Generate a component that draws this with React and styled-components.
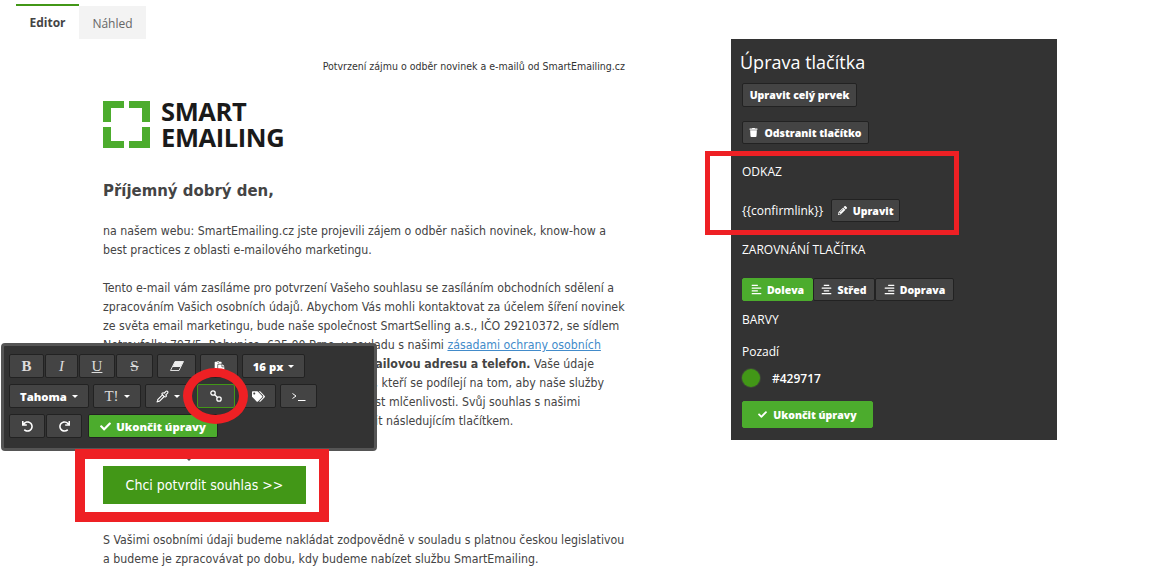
import React from 'react';
import styled, {createGlobalStyle} from 'styled-components';
import {
  FaAlignCenter,
  FaAlignLeft,
  FaAlignRight,
  FaCheck,
  FaPaste,
  FaPencilAlt,
  FaRedo,
  FaTags,
  FaTrash,
  FaUndo
} from 'react-icons/fa';
import {Pipette} from 'lucide-react';

const GlobalStyle = createGlobalStyle`
  html, body {
    margin: 0;
    padding: 0;
    background: #fff;
    overflow: hidden;
  }
`;

const Page = styled.div`
  position: relative;
  width: 1158px;
  height: 582px;
  overflow: hidden;
  font-family: 'Open Sans', sans-serif;
`;

const Tabs = styled.div`
  display: flex;
  align-items: flex-end;
  height: 39px;
  padding-left: 16px;
`;

const Tab = styled.div`
  display: flex;
  align-items: center;
  justify-content: center;
  box-sizing: border-box;
  width: ${props => props.width}px;
  height: ${props => (props.active ? 35 : 33)}px;
  font-size: 12px;
  font-weight: ${props => (props.active ? 700 : 400)};
  color: ${props => (props.active ? '#444' : '#666')};
  background: ${props => (props.active ? '#fff' : '#f3f3f3')};
  border-top: ${props => (props.active ? '2px solid #429717' : 'none')};
  padding-top: ${props => (props.active ? 0 : 2)}px;
  padding-bottom: ${props => (props.active ? 1 : 0)}px;
`;

const Columns = styled.div`
  display: flex;
  align-items: flex-start;
  padding-left: 103px;
`;

const Email = styled.div`
  width: 522px;
  flex-shrink: 0;
  font-family: 'DejaVu Sans Condensed', 'DejaVu Sans', sans-serif;
  font-stretch: condensed;
  font-size: 12.25px;
  line-height: 19px;
  color: #444;
  white-space: nowrap;
`;

const Preheader = styled.div`
  margin-top: 19px;
  height: 17px;
  line-height: 17px;
  text-align: right;
  font-size: 10.5px;
  color: #333;
`;

const Logo = styled.div`
  display: flex;
  align-items: center;
  margin-top: 26px;
  height: 47px;
  gap: 11px;
`;

const LogoText = styled.div`
  font-family: 'Open Sans', sans-serif;
  font-stretch: normal;
  font-weight: 700;
  font-size: 25.5px;
  line-height: 25.5px;
  letter-spacing: -0.4px;
  color: #1a1a1a;
`;

const Greeting = styled.h1`
  margin: 29px 0 0;
  font-size: 16.6px;
  line-height: 28px;
  font-weight: 700;
  color: #444;
`;

const Paragraph = styled.p`
  margin: ${props => props.top}px 0 0;
`;

const Link = styled.a`
  color: #428bca;
  text-decoration: underline;
`;

const CtaButton = styled.div`
  display: flex;
  align-items: center;
  justify-content: center;
  width: 203px;
  height: 38px;
  margin-top: 35px;
  background: #429717;
  color: #fff;
  font-size: 14px;
`;

const Panel = styled.aside`
  box-sizing: border-box;
  width: 326px;
  height: 401px;
  margin-left: 106px;
  padding: 10px 11px 0;
  background: #333;
  color: #fff;
  font-size: 12px;
  font-weight: 500;
  flex-shrink: 0;
`;

const PanelTitle = styled.h2`
  margin: 0 0 8px -2px;
  font-size: 18px;
  line-height: 26px;
  font-weight: 400;
`;

const Stack = styled.div`
  display: flex;
  flex-direction: column;
  align-items: flex-start;
  gap: 14px;
`;

const PanelButton = styled.button`
  display: inline-flex;
  align-items: center;
  justify-content: center;
  gap: ${props => (props.iconSize ? 5 : 6)}px;
  box-sizing: border-box;
  height: ${props => props.height || 24}px;
  width: ${props => props.width}px;
  padding: 0;
  border: 1px solid #222;
  border-radius: 2px;
  background: ${props => (props.primary ? '#4cac2d' : '#444')};
  border-color: ${props => (props.primary ? '#4cac2d' : '#222')};
  color: #fff;
  font-family: 'Open Sans', sans-serif;
  font-size: 10.5px;
  font-weight: 800;
  svg {
    font-size: ${props => props.iconSize || 9}px;
  }
`;

const SectionLabel = styled.div`
  height: 18px;
  line-height: 18px;
  margin-top: ${props => props.top}px;
  font-size: 12px;
`;

const LinkRow = styled.div`
  display: flex;
  align-items: center;
  gap: 8px;
  margin-top: 18px;
`;

const AlignGroup = styled.div`
  display: flex;
  margin-top: 19px;
`;

const ColorRow = styled.div`
  display: flex;
  align-items: center;
  gap: 12px;
  margin-top: 6px;
  height: 22px;
  font-weight: 600;
  font-size: 12px;
`;

const Swatch = styled.span`
  width: 18px;
  height: 18px;
  border-radius: 50%;
  background: #429717;
  box-shadow: 0 0 0 1px #3d4a36;
`;

const Finish = styled.div`
  margin-top: 12px;
`;

const Toolbar = styled.div`
  position: absolute;
  left: 1px;
  top: 343px;
  box-sizing: border-box;
  width: 376px;
  height: 108px;
  padding: 8px 5px;
  display: flex;
  flex-direction: column;
  gap: 6px;
  background: #333;
  border: 3px solid #555;
  border-radius: 4px;
  &::after {
    content: '';
    position: absolute;
    left: 178px;
    bottom: -7px;
    border: 6px solid transparent;
    border-bottom: 0;
    border-top-color: #555;
  }
`;

const ToolRow = styled.div`
  display: flex;
  height: 24px;
`;

const Tool = styled.button`
  display: flex;
  align-items: center;
  justify-content: center;
  gap: 5px;
  box-sizing: border-box;
  flex-shrink: 0;
  width: ${props => props.width}px;
  height: 24px;
  margin-left: ${props => props.gap || 0}px;
  padding: 0;
  background: ${props => (props.primary ? '#4cac2d' : '#444')};
  border: 1px solid ${props => (props.active ? '#429717' : '#222')};
  border-radius: 2px;
  color: ${props => (props.serif ? '#ddd' : '#fff')};
  font-family: ${props => (props.serif ? "'Liberation Serif', serif" : "'Open Sans', sans-serif")};
  font-size: ${props => (props.serif ? 15 : 11.3)}px;
  font-weight: ${props => (props.strong ? 700 : props.serif ? 400 : 800)};
  font-style: ${props => (props.italic ? 'italic' : 'normal')};
  text-decoration: ${props => props.deco || 'none'};
  svg {
    font-size: ${props => props.iconSize || 11}px;
  }
`;

const Caret = styled.span`
  width: 0;
  height: 0;
  border: 3px solid transparent;
  border-bottom: 0;
  border-top-color: #fff;
`;

const PointerTip = styled.div`
  position: absolute;
  left: 187px;
  top: 459px;
  width: 0;
  height: 0;
  border: 2px solid transparent;
  border-bottom: 0;
  border-top-color: #555;
`;

const Ring = styled.div`
  position: absolute;
  left: 183px;
  top: 368px;
  box-sizing: border-box;
  width: 65px;
  height: 56px;
  border: 9px solid #ee2024;
  border-radius: 50%;
`;

const Highlight = styled.div`
  position: absolute;
  left: ${props => props.x}px;
  top: ${props => props.y}px;
  box-sizing: border-box;
  width: ${props => props.w}px;
  height: ${props => props.h}px;
  border: ${props => props.thick}px solid #ee2024;
`;

const bracket = 'M0 0H21V7H8V21H0Z';

function LogoMark() {
  return (
    <svg width="47" height="47" viewBox="0 0 47 47">
      <g fill="#4cac2d">
        <path d={bracket} />
        <path d={bracket} transform="matrix(-1 0 0 1 47 0)" />
        <path d={bracket} transform="matrix(1 0 0 -1 0 47)" />
        <path d={bracket} transform="matrix(-1 0 0 -1 47 47)" />
      </g>
    </svg>
  );
}

function EraserIcon() {
  return (
    <svg width="14" height="10" viewBox="0 0 14 10">
      <path d="M5 .5H13.5L9 9.5H.5Z" fill="none" stroke="#ddd" />
      <path d="M5 .5H13.5L10.5 6H2.5Z" fill="#eee" />
    </svg>
  );
}

function ChainIcon() {
  return (
    <svg width="12" height="12" viewBox="0 0 12 12" fill="none" stroke="#fff" strokeWidth="1.3">
      <circle cx="3" cy="3" r="2.2" />
      <circle cx="9" cy="9" r="2.2" />
      <path d="M4.5 4.5L7.5 7.5" />
    </svg>
  );
}

function PromptIcon() {
  return (
    <svg width="14" height="9" viewBox="0 0 14 9" fill="none" stroke="#fff" strokeWidth="1">
      <path d="M0.5 1.5L4 4L0.5 6.5" />
      <path d="M6 8.5H13.5" />
    </svg>
  );
}

export default function App() {
  return (
    <Page>
      <GlobalStyle />
      <Tabs>
        <Tab active width={63}>Editor</Tab>
        <Tab width={67}>Náhled</Tab>
      </Tabs>
      <Columns>
        <Email>
          <Preheader>Potvrzení zájmu o odběr novinek a e-mailů od SmartEmailing.cz</Preheader>
          <Logo>
            <LogoMark />
            <LogoText>SMART<br />EMAILING</LogoText>
          </Logo>
          <Greeting>Příjemný dobrý den,</Greeting>
          <Paragraph top={17}>
            na našem webu: SmartEmailing.cz jste projevili zájem o odběr našich novinek, know-how a<br />
            best practices z oblasti e-mailového marketingu.
          </Paragraph>
          <Paragraph top={19}>
            Tento e-mail vám zasíláme pro potvrzení Vašeho souhlasu se zasíláním obchodních sdělení a<br />
            zpracováním Vašich osobních údajů. Abychom Vás mohli kontaktovat za účelem šíření novinek<br />
            ze světa email marketingu, bude naše společnost SmartSelling a.s., IČO 29210372, se sídlem<br />
            Netroufalky 797/5, Bohunice, 625 00 Brno, v souladu s našimi <Link>zásadami ochrany osobních</Link><br />
            údajů též zpracovávat Vaše jméno, příjmení, <b>e-mailovou adresu a telefon.</b> Vaše údaje<br />
            budou zpřístupněny pouze našim zaměstnancům, kteří se podílejí na tom, aby naše služby<br />
            fungovaly, ti jsou vázáni zákonem a mají povinnost mlčenlivosti. Svůj souhlas s našimi<br />
            podmínkami můžete kdykoli velmi snadno potvrdit následujícím tlačítkem.
          </Paragraph>
          <CtaButton>Chci potvrdit souhlas &gt;&gt;</CtaButton>
          <Paragraph top={27}>
            S Vašimi osobními údaji budeme nakládat zodpovědně v souladu s platnou českou legislativou<br />
            a budeme je zpracovávat po dobu, kdy budeme nabízet službu SmartEmailing.
          </Paragraph>
        </Email>
        <Panel>
          <PanelTitle>Úprava tlačítka</PanelTitle>
          <Stack>
            <PanelButton width={115}>Upravit celý prvek</PanelButton>
            <PanelButton width={127} height={23}><FaTrash />Odstranit tlačítko</PanelButton>
          </Stack>
          <SectionLabel top={19}>ODKAZ</SectionLabel>
          <LinkRow>
            <span>{'{{confirmlink}}'}</span>
            <PanelButton width={69} height={23}><FaPencilAlt />Upravit</PanelButton>
          </LinkRow>
          <SectionLabel top={19}>ZAROVNÁNÍ TLAČÍTKA</SectionLabel>
          <AlignGroup>
            <PanelButton primary iconSize={11} width={71} height={23}><FaAlignLeft />Doleva</PanelButton>
            <PanelButton iconSize={11} width={62} height={23}><FaAlignCenter />Střed</PanelButton>
            <PanelButton iconSize={11} width={79} height={23}><FaAlignRight />Doprava</PanelButton>
          </AlignGroup>
          <SectionLabel top={10}>BARVY</SectionLabel>
          <SectionLabel top={14}>Pozadí</SectionLabel>
          <ColorRow>
            <Swatch />
            #429717
          </ColorRow>
          <Finish>
            <PanelButton primary width={131} height={27}><FaCheck />Ukončit úpravy</PanelButton>
          </Finish>
        </Panel>
      </Columns>
      <Toolbar>
        <ToolRow>
          <Tool serif strong width={35}>B</Tool>
          <Tool serif italic width={33} gap={1}>I</Tool>
          <Tool serif deco="underline" width={36} gap={1}>U</Tool>
          <Tool serif deco="line-through" width={37} gap={1}>S</Tool>
          <Tool width={39} gap={4}><EraserIcon /></Tool>
          <Tool width={38} gap={4}><FaPaste /></Tool>
          <Tool width={63} gap={4}>16 px<Caret /></Tool>
        </ToolRow>
        <ToolRow>
          <Tool width={80}>Tahoma<Caret /></Tool>
          <Tool serif width={48} gap={4}>T!<Caret /></Tool>
          <Tool width={45} gap={4}><Pipette size={13} /><Caret /></Tool>
          <Tool active width={38} gap={7}><ChainIcon /></Tool>
          <Tool width={36} gap={5} iconSize={13}><FaTags /></Tool>
          <Tool width={37} gap={4}><PromptIcon /></Tool>
        </ToolRow>
        <ToolRow>
          <Tool width={36}><FaUndo /></Tool>
          <Tool width={36} gap={1}><FaRedo /></Tool>
          <Tool primary width={130} gap={6}><FaCheck />Ukončit úpravy</Tool>
        </ToolRow>
      </Toolbar>
      <PointerTip />
      <Ring />
      <Highlight x={75} y={449} w={254} h={73} thick={10} />
      <Highlight x={705} y={151} w={254} h={84} thick={5} />
    </Page>
  );
}
